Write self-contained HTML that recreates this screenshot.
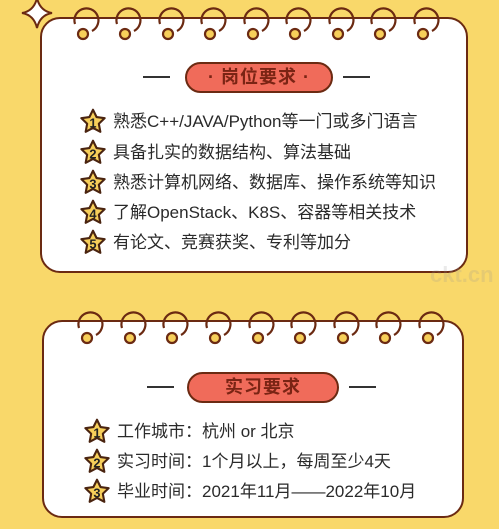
<!DOCTYPE html>
<html><head><meta charset="utf-8"><style>
*{margin:0;padding:0;box-sizing:border-box}
body{width:499px;height:529px;overflow:hidden;background:#f9d86a;position:relative;font-family:"Liberation Sans","Noto Sans CJK SC",sans-serif}
.card{position:absolute;background:#fff;border:2.5px solid #6b2a12;border-radius:20px}
.pill{position:absolute;background:#f06b5a;border:2px solid #6b2a12;border-radius:16px;color:#7a2414;font-weight:bold;font-size:18px;text-align:center;line-height:27px;letter-spacing:1px}
.dash{position:absolute;height:2px;width:27px;background:#333}
.row{position:absolute;left:0;font-size:17px;color:#2a2a2a;height:26px;line-height:26px;white-space:nowrap}
.row svg{position:absolute;left:-2px;top:-1px}
.row span{position:absolute;left:32px}
svg.rings{position:absolute;left:0;top:0}
</style></head><body>
<div style="position:absolute;left:68px;top:60px;font-size:30px;font-weight:bold;color:rgba(150,150,150,.18);letter-spacing:2px">创客贴</div>
<div class="card" style="left:40px;top:17px;width:428px;height:256px"></div>
<div class="card" style="left:42px;top:320px;width:422px;height:198px"></div>
<svg class="rings" width="499" height="529">
<path d="M37 -2 Q40 11 52 13 Q40 15 37 28 Q34 15 22 13 Q34 11 37 -2Z" fill="#fff" stroke="#6b2a12" stroke-width="2"/>
<g fill="#f7cf5a" stroke="#6b2a12" stroke-width="2.2">
<g transform="translate(83,0)"><path d="M-8 24 A12 12 0 1 1 9 31" fill="none"/><circle cx="0" cy="34" r="5"/></g>
<g transform="translate(125,0)"><path d="M-8 24 A12 12 0 1 1 9 31" fill="none"/><circle cx="0" cy="34" r="5"/></g>
<g transform="translate(168,0)"><path d="M-8 24 A12 12 0 1 1 9 31" fill="none"/><circle cx="0" cy="34" r="5"/></g>
<g transform="translate(210,0)"><path d="M-8 24 A12 12 0 1 1 9 31" fill="none"/><circle cx="0" cy="34" r="5"/></g>
<g transform="translate(253,0)"><path d="M-8 24 A12 12 0 1 1 9 31" fill="none"/><circle cx="0" cy="34" r="5"/></g>
<g transform="translate(295,0)"><path d="M-8 24 A12 12 0 1 1 9 31" fill="none"/><circle cx="0" cy="34" r="5"/></g>
<g transform="translate(338,0)"><path d="M-8 24 A12 12 0 1 1 9 31" fill="none"/><circle cx="0" cy="34" r="5"/></g>
<g transform="translate(380,0)"><path d="M-8 24 A12 12 0 1 1 9 31" fill="none"/><circle cx="0" cy="34" r="5"/></g>
<g transform="translate(423,0)"><path d="M-8 24 A12 12 0 1 1 9 31" fill="none"/><circle cx="0" cy="34" r="5"/></g>
<g transform="translate(87,304)"><path d="M-8 24 A12 12 0 1 1 9 31" fill="none"/><circle cx="0" cy="34" r="5"/></g>
<g transform="translate(130,304)"><path d="M-8 24 A12 12 0 1 1 9 31" fill="none"/><circle cx="0" cy="34" r="5"/></g>
<g transform="translate(172,304)"><path d="M-8 24 A12 12 0 1 1 9 31" fill="none"/><circle cx="0" cy="34" r="5"/></g>
<g transform="translate(215,304)"><path d="M-8 24 A12 12 0 1 1 9 31" fill="none"/><circle cx="0" cy="34" r="5"/></g>
<g transform="translate(258,304)"><path d="M-8 24 A12 12 0 1 1 9 31" fill="none"/><circle cx="0" cy="34" r="5"/></g>
<g transform="translate(300,304)"><path d="M-8 24 A12 12 0 1 1 9 31" fill="none"/><circle cx="0" cy="34" r="5"/></g>
<g transform="translate(343,304)"><path d="M-8 24 A12 12 0 1 1 9 31" fill="none"/><circle cx="0" cy="34" r="5"/></g>
<g transform="translate(385,304)"><path d="M-8 24 A12 12 0 1 1 9 31" fill="none"/><circle cx="0" cy="34" r="5"/></g>
<g transform="translate(428,304)"><path d="M-8 24 A12 12 0 1 1 9 31" fill="none"/><circle cx="0" cy="34" r="5"/></g>
</g>
<text x="430" y="282" font-size="22" font-weight="bold" fill="rgba(150,150,150,.2)" font-family="Liberation Sans">ckt.cn</text>
</svg>
<div class="dash" style="left:143px;top:76px"></div><div class="dash" style="left:343px;top:76px"></div>
<div class="pill" style="left:185px;top:62px;width:148px;height:31px">· 岗位要求 ·</div>
<div class="dash" style="left:147px;top:386px"></div><div class="dash" style="left:349px;top:386px"></div>
<div class="pill" style="left:187px;top:372px;width:152px;height:31px">实习要求</div>

<div style="position:absolute;left:81px;top:0">
<div class="row" style="top:109px"><svg width="28" height="28" viewBox="0 0 24 24"><path d="M12 1.5l3.1 6.3 6.9.9-5 4.8 1.3 6.9L12 17.1l-6.3 3.3L7 13.5 2 8.7l6.9-.9z" fill="#f7cf5a" stroke="#4a2410" stroke-width="1.8" stroke-linejoin="round"/><text x="12" y="16.5" font-size="11" font-weight="bold" text-anchor="middle" fill="#222">1</text></svg><span>熟悉C++/JAVA/Python等一门或多门语言</span></div>
<div class="row" style="top:140px"><svg width="28" height="28" viewBox="0 0 24 24"><path d="M12 1.5l3.1 6.3 6.9.9-5 4.8 1.3 6.9L12 17.1l-6.3 3.3L7 13.5 2 8.7l6.9-.9z" fill="#f7cf5a" stroke="#4a2410" stroke-width="1.8" stroke-linejoin="round"/><text x="12" y="16.5" font-size="11" font-weight="bold" text-anchor="middle" fill="#222">2</text></svg><span>具备扎实的数据结构、算法基础</span></div>
<div class="row" style="top:170px"><svg width="28" height="28" viewBox="0 0 24 24"><path d="M12 1.5l3.1 6.3 6.9.9-5 4.8 1.3 6.9L12 17.1l-6.3 3.3L7 13.5 2 8.7l6.9-.9z" fill="#f7cf5a" stroke="#4a2410" stroke-width="1.8" stroke-linejoin="round"/><text x="12" y="16.5" font-size="11" font-weight="bold" text-anchor="middle" fill="#222">3</text></svg><span>熟悉计算机网络、数据库、操作系统等知识</span></div>
<div class="row" style="top:200px"><svg width="28" height="28" viewBox="0 0 24 24"><path d="M12 1.5l3.1 6.3 6.9.9-5 4.8 1.3 6.9L12 17.1l-6.3 3.3L7 13.5 2 8.7l6.9-.9z" fill="#f7cf5a" stroke="#4a2410" stroke-width="1.8" stroke-linejoin="round"/><text x="12" y="16.5" font-size="11" font-weight="bold" text-anchor="middle" fill="#222">4</text></svg><span>了解OpenStack、K8S、容器等相关技术</span></div>
<div class="row" style="top:230px"><svg width="28" height="28" viewBox="0 0 24 24"><path d="M12 1.5l3.1 6.3 6.9.9-5 4.8 1.3 6.9L12 17.1l-6.3 3.3L7 13.5 2 8.7l6.9-.9z" fill="#f7cf5a" stroke="#4a2410" stroke-width="1.8" stroke-linejoin="round"/><text x="12" y="16.5" font-size="11" font-weight="bold" text-anchor="middle" fill="#222">5</text></svg><span>有论文、竞赛获奖、专利等加分</span></div>
<div class="row" style="top:419px;left:4px"><svg width="28" height="28" viewBox="0 0 24 24"><path d="M12 1.5l3.1 6.3 6.9.9-5 4.8 1.3 6.9L12 17.1l-6.3 3.3L7 13.5 2 8.7l6.9-.9z" fill="#f7cf5a" stroke="#4a2410" stroke-width="1.8" stroke-linejoin="round"/><text x="12" y="16.5" font-size="11" font-weight="bold" text-anchor="middle" fill="#222">1</text></svg><span>工作城市：杭州 or 北京</span></div>
<div class="row" style="top:449px;left:4px"><svg width="28" height="28" viewBox="0 0 24 24"><path d="M12 1.5l3.1 6.3 6.9.9-5 4.8 1.3 6.9L12 17.1l-6.3 3.3L7 13.5 2 8.7l6.9-.9z" fill="#f7cf5a" stroke="#4a2410" stroke-width="1.8" stroke-linejoin="round"/><text x="12" y="16.5" font-size="11" font-weight="bold" text-anchor="middle" fill="#222">2</text></svg><span>实习时间：1个月以上，每周至少4天</span></div>
<div class="row" style="top:479px;left:4px"><svg width="28" height="28" viewBox="0 0 24 24"><path d="M12 1.5l3.1 6.3 6.9.9-5 4.8 1.3 6.9L12 17.1l-6.3 3.3L7 13.5 2 8.7l6.9-.9z" fill="#f7cf5a" stroke="#4a2410" stroke-width="1.8" stroke-linejoin="round"/><text x="12" y="16.5" font-size="11" font-weight="bold" text-anchor="middle" fill="#222">3</text></svg><span>毕业时间：2021年11月——2022年10月</span></div>
</div>
</body></html>
